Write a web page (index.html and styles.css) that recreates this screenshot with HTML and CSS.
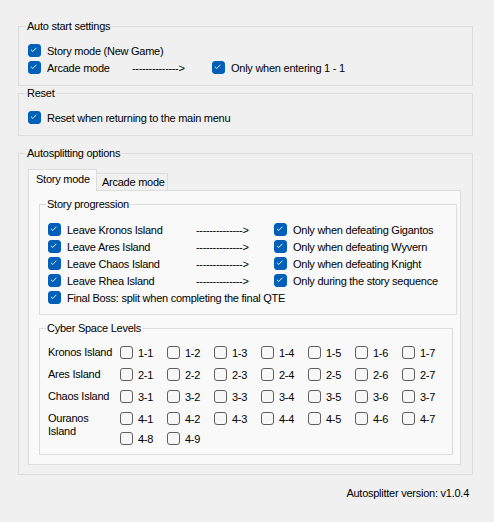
FILE: index.html
```html
<!DOCTYPE html>
<html>
<head>
<meta charset="utf-8">
<link rel="stylesheet" href="styles.css">
</head>
<body>
<fieldset class="group g-auto">
  <legend>Auto start settings</legend>
  <div class="row"><span class="box on"><svg class="tick" viewBox="0 0 13 13"><path d="M3.3 6.6l2.1 2.1 4.3-4.4"/></svg></span><span class="txt">Story mode (New Game)</span></div>
  <div class="row split split-auto">
    <div class="cell"><span class="box on"><svg class="tick" viewBox="0 0 13 13"><path d="M3.3 6.6l2.1 2.1 4.3-4.4"/></svg></span><span class="txt">Arcade mode</span></div>
    <span class="arrow">--------------&gt;</span>
    <div class="cell"><span class="box on"><svg class="tick" viewBox="0 0 13 13"><path d="M3.3 6.6l2.1 2.1 4.3-4.4"/></svg></span><span class="txt">Only when entering 1 - 1</span></div>
  </div>
</fieldset>

<fieldset class="group g-reset">
  <legend>Reset</legend>
  <div class="row"><span class="box on"><svg class="tick" viewBox="0 0 13 13"><path d="M3.3 6.6l2.1 2.1 4.3-4.4"/></svg></span><span class="txt">Reset when returning to the main menu</span></div>
</fieldset>

<fieldset class="group g-split">
  <legend>Autosplitting options</legend>
  <div class="tabs">
    <div class="tab active">Story mode</div>
    <div class="tab">Arcade mode</div>
  </div>
  <div class="panel">
    <fieldset class="group g-story">
      <legend>Story progression</legend>
      <div class="row split split-story">
        <div class="cell"><span class="box on"><svg class="tick" viewBox="0 0 13 13"><path d="M3.3 6.6l2.1 2.1 4.3-4.4"/></svg></span><span class="txt">Leave Kronos Island</span></div>
        <span class="arrow">--------------&gt;</span>
        <div class="cell"><span class="box on"><svg class="tick" viewBox="0 0 13 13"><path d="M3.3 6.6l2.1 2.1 4.3-4.4"/></svg></span><span class="txt">Only when defeating Gigantos</span></div>
      </div>
      <div class="row split split-story">
        <div class="cell"><span class="box on"><svg class="tick" viewBox="0 0 13 13"><path d="M3.3 6.6l2.1 2.1 4.3-4.4"/></svg></span><span class="txt">Leave Ares Island</span></div>
        <span class="arrow">--------------&gt;</span>
        <div class="cell"><span class="box on"><svg class="tick" viewBox="0 0 13 13"><path d="M3.3 6.6l2.1 2.1 4.3-4.4"/></svg></span><span class="txt">Only when defeating Wyvern</span></div>
      </div>
      <div class="row split split-story">
        <div class="cell"><span class="box on"><svg class="tick" viewBox="0 0 13 13"><path d="M3.3 6.6l2.1 2.1 4.3-4.4"/></svg></span><span class="txt">Leave Chaos Island</span></div>
        <span class="arrow">--------------&gt;</span>
        <div class="cell"><span class="box on"><svg class="tick" viewBox="0 0 13 13"><path d="M3.3 6.6l2.1 2.1 4.3-4.4"/></svg></span><span class="txt">Only when defeating Knight</span></div>
      </div>
      <div class="row split split-story">
        <div class="cell"><span class="box on"><svg class="tick" viewBox="0 0 13 13"><path d="M3.3 6.6l2.1 2.1 4.3-4.4"/></svg></span><span class="txt">Leave Rhea Island</span></div>
        <span class="arrow">--------------&gt;</span>
        <div class="cell"><span class="box on"><svg class="tick" viewBox="0 0 13 13"><path d="M3.3 6.6l2.1 2.1 4.3-4.4"/></svg></span><span class="txt">Only during the story sequence</span></div>
      </div>
      <div class="row"><span class="box on"><svg class="tick" viewBox="0 0 13 13"><path d="M3.3 6.6l2.1 2.1 4.3-4.4"/></svg></span><span class="txt">Final Boss: split when completing the final QTE</span></div>
    </fieldset>

    <fieldset class="group g-cyber">
      <legend>Cyber Space Levels</legend>
      <div class="island">
        <div class="iname">Kronos Island</div>
        <div class="levels">
          <div class="lv"><span class="box"></span>1-1</div>
          <div class="lv"><span class="box"></span>1-2</div>
          <div class="lv"><span class="box"></span>1-3</div>
          <div class="lv"><span class="box"></span>1-4</div>
          <div class="lv"><span class="box"></span>1-5</div>
          <div class="lv"><span class="box"></span>1-6</div>
          <div class="lv"><span class="box"></span>1-7</div>
        </div>
      </div>
      <div class="island">
        <div class="iname">Ares Island</div>
        <div class="levels">
          <div class="lv"><span class="box"></span>2-1</div>
          <div class="lv"><span class="box"></span>2-2</div>
          <div class="lv"><span class="box"></span>2-3</div>
          <div class="lv"><span class="box"></span>2-4</div>
          <div class="lv"><span class="box"></span>2-5</div>
          <div class="lv"><span class="box"></span>2-6</div>
          <div class="lv"><span class="box"></span>2-7</div>
        </div>
      </div>
      <div class="island">
        <div class="iname">Chaos Island</div>
        <div class="levels">
          <div class="lv"><span class="box"></span>3-1</div>
          <div class="lv"><span class="box"></span>3-2</div>
          <div class="lv"><span class="box"></span>3-3</div>
          <div class="lv"><span class="box"></span>3-4</div>
          <div class="lv"><span class="box"></span>3-5</div>
          <div class="lv"><span class="box"></span>3-6</div>
          <div class="lv"><span class="box"></span>3-7</div>
        </div>
      </div>
      <div class="island">
        <div class="iname">Ouranos<br>Island</div>
        <div class="levels">
          <div class="lv"><span class="box"></span>4-1</div>
          <div class="lv"><span class="box"></span>4-2</div>
          <div class="lv"><span class="box"></span>4-3</div>
          <div class="lv"><span class="box"></span>4-4</div>
          <div class="lv"><span class="box"></span>4-5</div>
          <div class="lv"><span class="box"></span>4-6</div>
          <div class="lv"><span class="box"></span>4-7</div>
          <div class="lv"><span class="box"></span>4-8</div>
          <div class="lv"><span class="box"></span>4-9</div>
        </div>
      </div>
    </fieldset>
  </div>
</fieldset>

<div class="footer">Autosplitter version: v1.0.4</div>
</body>
</html>
```

FILE: styles.css
```css
html, body {
  margin: 0;
  padding: 0;
  background: #f0f0f0;
}
body {
  font-family: "Liberation Sans", Arial, sans-serif;
  font-size: 11px;
  letter-spacing: -0.25px;
  color: #000;
  width: 494px;
  height: 522px;
  overflow: hidden;
}

.group {
  border: 1px solid #dcdcdc;
  margin: 0;
  min-width: 0;
}
.group > legend {
  line-height: 14px;
  padding: 0 1px;
  margin-left: -2px;
}

.g-auto { margin: 19px 21px 0 18px; padding: 9px 9px 9px 9px; }
.g-reset { margin: 0 21px 0 18px; padding: 9px 9px 9px 9px; }
.g-split { margin: 10px 21px 0 18px; padding: 9px 11px 9px 9px; }
.g-story { margin: 6px 3px 0 10px; padding: 10px 8px 8px 8px; }
.g-cyber { margin: 6px 7px 9px 10px; padding: 9px 8px 7px 8px; }

.row {
  display: flex;
  align-items: center;
  height: 17px;
}
.split { display: grid; align-items: center; }
.split-auto { grid-template-columns: 104px 80px auto; }
.split-story { grid-template-columns: 148px 78px auto; }
.cell { display: flex; align-items: center; }

.txt { margin-left: 6px; line-height: 14px; white-space: nowrap; }
.arrow { white-space: nowrap; letter-spacing: -0.35px; line-height: 14px; }

.box {
  box-sizing: border-box;
  width: 13px;
  height: 13px;
  flex: none;
  border-radius: 3px;
  border: 1px solid #5f5f5f;
  background: #f7f7f7;
  display: inline-block;
}
.box.on {
  background: #005fb8;
  border-color: #005fb8;
}
.tick {
  display: block;
  width: 11px;
  height: 11px;
}
.tick path {
  fill: none;
  stroke: #fff;
  stroke-width: 1.1;
  transform: translate(-1px, -1px);
}

.tabs {
  display: flex;
  align-items: flex-end;
  height: 21px;
}
.tab {
  box-sizing: border-box;
  line-height: 14px;
  border: 1px solid #dcdcdc;
  border-bottom: none;
  white-space: nowrap;
}
.tab.active {
  width: 69px;
  height: 22px;
  margin-bottom: -1px;
  padding: 2px 0 0 7px;
  background: #f9f9f9;
  position: relative;
  z-index: 1;
}
.tab:not(.active) {
  width: 71px;
  height: 17px;
  border-left: none;
  padding: 1px 0 0 5px;
  background: #f0f0f0;
}

.panel {
  border: 1px solid #dcdcdc;
  background: #f9f9f9;
  overflow: hidden;
}

.island {
  display: flex;
  align-items: flex-start;
  margin-bottom: 5px;
}
.island:last-child { margin-bottom: 0; }
.iname {
  width: 72px;
  flex: none;
  padding-top: 2px;
  line-height: 13px;
}
.levels {
  display: grid;
  grid-template-columns: repeat(6, 47px) 30px;
  row-gap: 3px;
}
.lv {
  height: 17px;
  display: flex;
  align-items: center;
  white-space: nowrap;
}
.lv .box { margin-right: 5px; }

.footer {
  text-align: right;
  line-height: 14px;
  margin-top: 11px;
  padding-right: 25px;
}
```
